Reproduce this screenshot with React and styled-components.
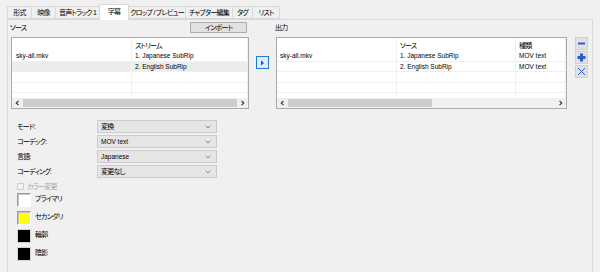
import React from 'react';
import styled, { createGlobalStyle, css } from 'styled-components';

const Global = createGlobalStyle`
  html, body { margin: 0; padding: 0; background: #f0f0f0; overflow: hidden; }
  body {
    font-family: "Liberation Sans", "Noto Sans CJK JP", sans-serif;
    font-size: 6.5px;
    color: #000000;
    font-feature-settings: "palt" 1;
  }
  * { box-sizing: border-box; }
`;

const jp = css`
  font-size: 7px;
  letter-spacing: -0.75px;
`;

const Window = styled.div`
  width: 600px;
  height: 272px;
  padding: 4px 7px 0 7px;
  display: flex;
  flex-direction: column;
  overflow: hidden;
`;

const TabBar = styled.div`
  display: flex;
  align-items: flex-end;
  height: 15px;
  padding-left: 1px;
  position: relative;
  z-index: 1;
`;

const Tab = styled.div`
  ${jp}
  width: ${p => p.$w}px;
  height: ${p => (p.$active ? 16 : 13)}px;
  margin-left: -1px;
  margin-bottom: ${p => (p.$active ? -1 : 0)}px;
  border: 1px solid #d9d9d9;
  border-bottom: ${p => (p.$active ? 'none' : '1px solid #d9d9d9')};
  background: ${p => (p.$active ? '#ffffff' : '#f0f0f0')};
  display: flex;
  align-items: ${p => (p.$active ? 'flex-start' : 'center')};
  padding-top: ${p => (p.$active ? 2 : 0)}px;
  justify-content: center;
  white-space: nowrap;
  line-height: 10px;
  position: relative;
  z-index: ${p => (p.$active ? 2 : 1)};
`;

const Panel = styled.div`
  height: 270px;
  flex: none;
  border: 1px solid #d9d9d9;
  background: #f0f0f0;
  padding: 0 3px;
`;

const TopArea = styled.div`
  display: flex;
  align-items: flex-start;
`;

const Section = styled.div`
  width: ${p => p.$w}px;
  display: flex;
  flex-direction: column;
`;

const SectionHead = styled.div`
  height: 17px;
  display: flex;
  justify-content: space-between;
  align-items: flex-start;
`;

const SectionLabel = styled.span`
  ${jp}
  margin-top: 2px;
  margin-left: -1px;
  line-height: 11px;
`;

const PlainButton = styled.div`
  ${jp}
  margin-top: 2px;
  margin-right: 2px;
  width: 57px;
  height: 11px;
  background: #e1e1e1;
  border: 1px solid #adadad;
  display: flex;
  align-items: center;
  justify-content: center;
  line-height: 9px;
`;

const ListBox = styled.div`
  height: 72px;
  border: 1px solid #ababab;
  background: #ffffff;
  display: flex;
  flex-direction: column;
  overflow: hidden;
`;

const Rows = styled.div`
  flex: 1;
  overflow: hidden;
`;

const Row = styled.div`
  display: grid;
  grid-template-columns: ${p => p.$cols};
  height: ${p => (p.$head ? 13 : 10.5)}px;
  background: ${p => (p.$sel ? '#ececec' : '#ffffff')};
  border-bottom: ${p => (p.$head ? 'none' : '1px solid #f0f0f0')};
`;

const Cell = styled.div`
  ${p => p.$head && jp}
  border-right: 1px solid #f0f0f0;
  padding-left: ${p => (p.$first ? 4 : 3)}px;
  white-space: nowrap;
  overflow: hidden;
  display: flex;
  align-items: ${p => (p.$head ? 'flex-end' : 'center')};
  padding-bottom: ${p => (p.$head ? 1 : 0)}px;
  line-height: 9px;
`;

const HScroll = styled.div`
  height: 10px;
  display: flex;
  background: #f0f0f0;
  flex: none;
`;

const ScrollArrow = styled.div`
  width: 11px;
  display: flex;
  align-items: center;
  justify-content: center;
`;

const Track = styled.div`
  flex: 1;
  padding: 1px 0;
  display: flex;
`;

const Thumb = styled.div`
  height: 100%;
  background: #cdcdcd;
`;

const MiddleCol = styled.div`
  width: 27px;
  display: flex;
  justify-content: flex-start;
  padding-left: 7px;
  padding-top: 36px;
`;

const MoveButton = styled.div`
  width: 13px;
  height: 13px;
  border: 1px solid #1f7ad8;
  background: #dcecfc;
  display: flex;
  align-items: center;
  justify-content: center;
`;

const SideButtons = styled.div`
  margin-left: 8px;
  padding-top: 17px;
  display: flex;
  flex-direction: column;
  gap: 1px;
`;

const SideButton = styled.div`
  width: 13px;
  height: 13px;
  background: #e1e1e1;
  border: 1px solid #d0d0d0;
  display: flex;
  align-items: center;
  justify-content: center;
`;

const Form = styled.div`
  margin-top: 11px;
  margin-left: 6px;
  display: grid;
  grid-template-columns: 80px 120px;
  row-gap: 2px;
  align-items: center;
`;

const FieldLabel = styled.div`
  ${jp}
  line-height: 10px;
  white-space: nowrap;
`;

const Combo = styled.div`
  height: 13px;
  background: #e5e5e5;
  border: 1px solid #cccccc;
  display: flex;
  align-items: center;
  justify-content: space-between;
  padding: 0 5px 0 3px;
  line-height: 9px;
`;

const ComboText = styled.span`
  ${p => p.$jp && jp}
`;

const CheckRow = styled.div`
  ${jp}
  margin-top: 4px;
  margin-left: 6px;
  display: flex;
  align-items: center;
  height: 8px;
  color: #a6a6a6;
`;

const CheckBox = styled.div`
  width: 7px;
  height: 7px;
  border: 1px solid #cfcfcf;
  background: #f4f4f4;
  margin-right: 3px;
`;

const Swatches = styled.div`
  margin-top: 3px;
  margin-left: 6px;
  display: flex;
  flex-direction: column;
  gap: 4px;
`;

const SwatchRow = styled.div`
  display: flex;
  align-items: flex-start;
`;

const Swatch = styled.div`
  width: 14px;
  height: 14px;
  background: ${p => p.$c};
  border: 1px solid;
  border-color: ${p => (p.$c === '#000000' ? '#d4d4d4' : '#9a9a9a #ffffff #ffffff #9a9a9a')};
  box-shadow: ${p => (p.$c === '#000000' ? 'none' : 'inset 1px 1px 0 #c8c8c8')};
`;

const SwatchLabel = styled.span`
  ${jp}
  margin-left: 4px;
  line-height: 12px;
`;

const Chevron = ({ dir }) => (
  <svg width="5" height="6" viewBox="0 0 5 6">
    <path d={dir === 'left' ? 'M3.5 0.8 L1.2 3 L3.5 5.2' : 'M1.5 0.8 L3.8 3 L1.5 5.2'} fill="none" stroke="#333" strokeWidth="1.1" />
  </svg>
);

const DownChevron = () => (
  <svg width="6" height="4" viewBox="0 0 6 4">
    <path d="M0.6 0.6 L3 3 L5.4 0.6" fill="none" stroke="#7a7a7a" strokeWidth="0.9" />
  </svg>
);

const ScrollBar = ({ thumbWidth }) => (
  <HScroll>
    <ScrollArrow><Chevron dir="left" /></ScrollArrow>
    <Track>
      <Thumb style={{ width: `${thumbWidth}%` }} />
    </Track>
    <ScrollArrow><Chevron dir="right" /></ScrollArrow>
  </HScroll>
);

const tabs = [
  ['形式', 25],
  ['映像', 25],
  ['音声トラック 1', 45],
  ['字幕', 30, true],
  ['クロップ / プレビュー', 58],
  ['チャプター編集', 48],
  ['タグ', 21],
  ['リスト', 28],
];

const srcCols = '120px 1fr';
const outCols = '120px 119px 1fr';

export default function App() {
  return (
    <>
      <Global />
      <Window>
        <TabBar>
          {tabs.map(([t, w, a]) => (
            <Tab key={t} $w={w} $active={a}>{t}</Tab>
          ))}
        </TabBar>
        <Panel>
          <TopArea>
            <Section $w={238}>
              <SectionHead>
                <SectionLabel>ソース</SectionLabel>
                <PlainButton>インポート</PlainButton>
              </SectionHead>
              <ListBox>
                <Rows>
                  <Row $cols={srcCols} $head>
                    <Cell $first $head />
                    <Cell $head>ストリーム</Cell>
                  </Row>
                  <Row $cols={srcCols}>
                    <Cell $first>sky-all.mkv</Cell>
                    <Cell>1. Japanese SubRip</Cell>
                  </Row>
                  <Row $cols={srcCols} $sel>
                    <Cell $first />
                    <Cell>2. English SubRip</Cell>
                  </Row>
                  <Row $cols={srcCols}><Cell $first /><Cell /></Row>
                  <Row $cols={srcCols}><Cell $first /><Cell /></Row>
                  <Row $cols={srcCols}><Cell $first /><Cell /></Row>
                </Rows>
                <ScrollBar thumbWidth={100} />
              </ListBox>
            </Section>
            <MiddleCol>
              <MoveButton>
                <svg width="5" height="6" viewBox="0 0 5 6">
                  <path d="M1 0.5 L4 3 L1 5.5 Z" fill="#1d4fe0" />
                </svg>
              </MoveButton>
            </MiddleCol>
            <Section $w={291}>
              <SectionHead>
                <SectionLabel>出力</SectionLabel>
              </SectionHead>
              <ListBox>
                <Rows>
                  <Row $cols={outCols} $head>
                    <Cell $head />
                    <Cell $head>ソース</Cell>
                    <Cell $head>種類</Cell>
                  </Row>
                  <Row $cols={outCols}>
                    <Cell>sky-all.mkv</Cell>
                    <Cell>1. Japanese SubRip</Cell>
                    <Cell>MOV text</Cell>
                  </Row>
                  <Row $cols={outCols}>
                    <Cell />
                    <Cell>2. English SubRip</Cell>
                    <Cell>MOV text</Cell>
                  </Row>
                  <Row $cols={outCols}><Cell /><Cell /><Cell /></Row>
                  <Row $cols={outCols}><Cell /><Cell /><Cell /></Row>
                  <Row $cols={outCols}><Cell /><Cell /><Cell /></Row>
                </Rows>
                <ScrollBar thumbWidth={54} />
              </ListBox>
            </Section>
            <SideButtons>
              <SideButton>
                <svg width="9" height="9" viewBox="0 0 9 9">
                  <rect x="1" y="3.5" width="7" height="2" fill="#2a5bd7" />
                </svg>
              </SideButton>
              <SideButton>
                <svg width="9" height="9" viewBox="0 0 9 9">
                  <rect x="0.5" y="3" width="8" height="3" fill="#2a5bd7" />
                  <rect x="3" y="0.5" width="3" height="8" fill="#2a5bd7" />
                </svg>
              </SideButton>
              <SideButton>
                <svg width="9" height="9" viewBox="0 0 9 9">
                  <path d="M1 1 L8 8 M8 1 L1 8" stroke="#2a5bd7" strokeWidth="1" />
                </svg>
              </SideButton>
            </SideButtons>
          </TopArea>

          <Form>
            <FieldLabel>モード:</FieldLabel>
            <Combo><ComboText $jp>変換</ComboText><DownChevron /></Combo>
            <FieldLabel>コーデック:</FieldLabel>
            <Combo><ComboText>MOV text</ComboText><DownChevron /></Combo>
            <FieldLabel>言語:</FieldLabel>
            <Combo><ComboText>Japanese</ComboText><DownChevron /></Combo>
            <FieldLabel>コーディング:</FieldLabel>
            <Combo><ComboText $jp>変更なし</ComboText><DownChevron /></Combo>
          </Form>

          <CheckRow>
            <CheckBox />
            <span>カラー変更</span>
          </CheckRow>

          <Swatches>
            <SwatchRow><Swatch $c="#ffffff" /><SwatchLabel>プライマリ</SwatchLabel></SwatchRow>
            <SwatchRow><Swatch $c="#ffff00" /><SwatchLabel>セカンダリ</SwatchLabel></SwatchRow>
            <SwatchRow><Swatch $c="#000000" /><SwatchLabel>輪郭</SwatchLabel></SwatchRow>
            <SwatchRow><Swatch $c="#000000" /><SwatchLabel>陰影</SwatchLabel></SwatchRow>
          </Swatches>
        </Panel>
      </Window>
    </>
  );
}
